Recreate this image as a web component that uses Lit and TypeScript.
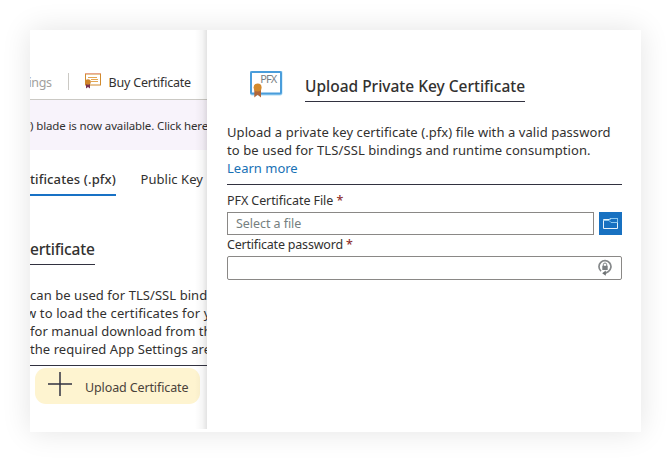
import { LitElement, html, css } from "lit";
import { customElement } from "lit/decorators.js";

@customElement("cert-background")
class CertBackground extends LitElement {
  static styles = css`
    :host { display: block; width: 177px; height: 399px; overflow: hidden; position: relative; white-space: nowrap; color: #323130; }
    .shade { position: absolute; top: 0; right: 0; bottom: 0; width: 12px;
      background: linear-gradient(to right, rgba(0,0,0,0), rgba(0,0,0,.035) 60%, rgba(0,0,0,.11)); }
    .toolbar { display: flex; align-items: flex-start; height: 69px; border-bottom: 1px solid #cbc9c4; box-sizing: content-box; font-size: 12.5px; line-height: 18px; }
    .ings { width: 38px; padding-top: 44px; color: #a19f9d; box-sizing: border-box; letter-spacing: -.4px; text-indent: -1.5px; }
    .sep { width: 1px; height: 17px; margin-top: 43px; background: #cbc9c4; }
    .toolbar svg { margin: 43px 0 0 16px; flex: none; }
    .buy { margin: 44px 0 0 7.5px; letter-spacing: -.2px; }
    .banner { height: 50px; background: #f8f3fb; font-size: 11.5px; line-height: 18px; letter-spacing: -.14px; padding-top: 17px; box-sizing: border-box; }
    .banner span { display: block; margin-left: -4.5px; }
    .tabs { display: flex; height: 46px; font-size: 13px; line-height: 18px; }
    .tab { padding-top: 20px; height: 46px; box-sizing: border-box; }
    .active { width: 86px; font-weight: 550; letter-spacing: .12px; border-bottom: 2px solid #1871c5; }
    .tab + .tab { margin-left: 24.5px; letter-spacing: .05px; }
    h2 { margin: 43px 0 0; width: 65px; height: 25px; border-bottom: 1px solid #323240; font-size: 15.5px; font-weight: 550; line-height: 20px; letter-spacing: -.2px; }
    .copy { margin-top: 21px; height: 79px; border-bottom: 1px solid #323240; font-size: 13px; line-height: 18px; }
    .copy div { letter-spacing: .06px; }
    .copy .l2 { margin-left: -4px; letter-spacing: .12px; }
    .upload { display: flex; align-items: center; box-sizing: border-box; width: 165px; height: 36px; margin: 2px 0 0 5px; padding: 3px 0 0 12.5px; border-radius: 11px; background: #fef4d0; font-size: 12.5px; letter-spacing: -.12px; line-height: 18px; color: #4a423a; }
    .upload svg { margin: -7px 13.5px 0 0; flex: none; }
  `;
  render() {
    return html`
      <div class="toolbar">
        <span class="ings">ings</span><span class="sep"></span>
        <svg width="16" height="17" viewBox="0 0 16 17">
          <rect x=".5" y="1" width="15" height="11" fill="#fff" stroke="#d08a2e"/>
          <path d="M0 .5H16" stroke="#e9a58b"/>
          <path d="M3 4.5H12M6 6.5H13M6 8.5H13" stroke="#e3a653" fill="none"/>
          <path d="M1 10H5V15.5L3 14L1 15.5Z" fill="#7a3352"/>
          <circle cx="3" cy="9" r="2.8" fill="#d08529"/>
        </svg>
        <span class="buy">Buy Certificate</span>
      </div>
      <div class="banner"><span>r) blade is now available. Click here</span></div>
      <div class="tabs"><div class="tab active">tificates (.pfx)</div><div class="tab">Public Key</div></div>
      <h2>ertificate</h2>
      <div class="copy">
        <div>can be used for TLS/SSL bind</div>
        <div class="l2">w to load the certificates for y</div>
        <div>for manual download from th</div>
        <div>the required App Settings are</div>
      </div>
      <div class="upload">
        <svg width="24" height="24" viewBox="0 0 24 24"><path d="M0 12H24M12 0V24" stroke="#323240" stroke-width="1.5"/></svg>
        Upload Certificate
      </div>
      <div class="shade"></div>`;
  }
}

@customElement("upload-panel")
class UploadPanel extends LitElement {
  static styles = css`
    :host { display: block; box-sizing: border-box; width: 434px; height: 402px; padding: 41px 19px 0 20px; background: #fff; color: #323130; white-space: nowrap; }
    .head { display: flex; height: 52px; }
    .head svg { margin-left: 23px; flex: none; }
    .pfx { font: 11px "Noto Sans", sans-serif; fill: #7a7f86; }
    h1 { margin: 5px 0 0 22px; width: 220px; height: 25px; border-bottom: 1px solid #323240; font-size: 15.5px; font-weight: 550; line-height: 20px; letter-spacing: -.01px; }
    .copy { font-size: 13px; line-height: 18px; height: 61px; border-bottom: 1px solid #323240; letter-spacing: .07px; }
    .l2 { letter-spacing: .09px; }
    .link { color: #1871b5; letter-spacing: 0; }
    label { display: block; padding-top: 7px; line-height: 18px; height: 20px; font-size: 12.5px; letter-spacing: -.08px; }
    label.pw { padding-top: 1px; letter-spacing: -.2px; }
    label b { font-weight: 500; color: #8e2f2c; }
    .row { display: flex; gap: 5px; }
    .input { box-sizing: border-box; flex: 1; height: 23px; border: 1px solid #8a8886; padding: 2px 8px; font-size: 12.5px; line-height: 18px; color: #767f80; letter-spacing: -.06px; }
    .browse { width: 23px; height: 23px; background: #1871c1; }
    .browse svg, .head svg { display: block; }
    .pwbox { display: flex; justify-content: flex-end; height: 24px; border-radius: 2px; padding: 2px 9px; }
  `;
  render() {
    return html`
      <div class="head">
        <svg width="33" height="29" viewBox="0 0 33 29">
          <rect x="0" y="-.6" width="32.4" height="25" rx="2" fill="#a9d9f5"/>
          <rect x="1" y="1" width="30" height="21.6" rx="1" fill="#fff" stroke="#4a9ddb" stroke-width="2"/>
          <text class="pfx" x="10.2" y="12.3" textLength="17">PFX</text>
          <path d="M4.3 18H11V26.5L7.6 23.8L4.3 26.5Z" fill="#b0663a"/>
          <circle cx="7.6" cy="16.6" r="4" fill="#d38a2e"/>
        </svg>
        <h1>Upload Private Key Certificate</h1>
      </div>
      <div class="copy">
        <div>Upload a private key certificate (.pfx) file with a valid password</div>
        <div class="l2">to be used for TLS/SSL bindings and runtime consumption.</div>
        <div class="link">Learn more</div>
      </div>
      <label>PFX Certificate File <b>*</b></label>
      <div class="row">
        <div class="input">Select a file</div>
        <div class="browse">
          <svg width="23" height="23" viewBox="0 0 23 23" fill="none">
            <path d="M4.5 7.5H10L12 6.5H18.5V16.5H4.5Z" stroke="#e8f2fa"/>
            <path d="M4.5 8.5H10L12 10.5H18.5V6.5H12L10 8.5" stroke="#8cc8f0"/>
          </svg>
        </div>
      </div>
      <label class="pw">Certificate password <b>*</b></label>
      <div class="input pwbox">
        <svg width="14" height="17" viewBox="0 0 14 17" fill="none">
          <path d="M3 12.2A6 6 0 1 1 10.4 12.6L7 14.4" stroke="#85888a" stroke-width="1.7"/>
          <path d="M7.8 11.6V16.8L4.2 14.2Z" fill="#6c7072"/>
          <rect x="4.3" y="6.8" width="5.4" height="4.2" fill="#7b7f82"/>
          <path d="M5.3 7V5.7A1.7 1.7 0 0 1 8.7 5.7V7" stroke="#7b7f82"/>
        </svg>
      </div>`;
  }
}

@customElement("app-root")
class AppRoot extends LitElement {
  static styles = css`
    :host { display: block; box-sizing: border-box; width: 670px; height: 460px; padding: 30px 29px 28px 30px; background: #fff; overflow: hidden; font-family: "Noto Sans", "Open Sans", sans-serif; }
    .window { display: flex; width: 611px; height: 402px; background: #fff; box-shadow: 0 0 28px rgba(0,0,0,.11); }
  `;
  render() {
    return html`<div class="window"><cert-background></cert-background><upload-panel></upload-panel></div>`;
  }
}
